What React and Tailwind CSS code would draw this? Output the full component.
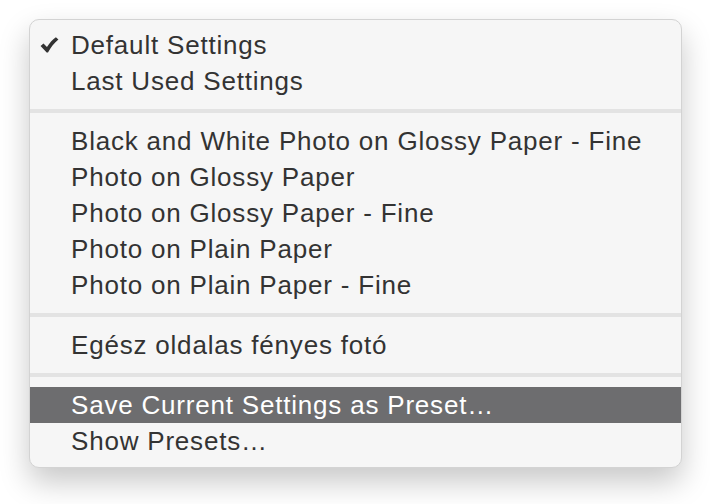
const groups = [
  [
    { label: "Default Settings", checked: true },
    { label: "Last Used Settings" },
  ],
  [
    { label: "Black and White Photo on Glossy Paper - Fine" },
    { label: "Photo on Glossy Paper" },
    { label: "Photo on Glossy Paper - Fine" },
    { label: "Photo on Plain Paper" },
    { label: "Photo on Plain Paper - Fine" },
  ],
  [{ label: "Egész oldalas fényes fotó" }],
  [
    { label: "Save Current Settings as Preset…", active: true },
    { label: "Show Presets…" },
  ],
];

function Check() {
  return (
    <svg viewBox="0 0 20 17" className="w-[19px] h-[16px]" fill="#333">
      <path d="M0.5 9.5 L3.6 6.8 L7.3 10.6 C10 6.5 13 3 16.8 0.3 L19.5 2.6 C15 6.2 11.5 11 8.4 16.5 L7 16.5 Z" />
    </svg>
  );
}

function Item({ item }) {
  return (
    <div
      className={
        "h-[36px] flex items-center " +
        (item.active ? "bg-[#6d6d6f] text-white" : "text-[#333333]")
      }
    >
      <div className="w-[41px] shrink-0 pl-[10px]">{item.checked && <Check />}</div>
      <span className="text-[26px] leading-none tracking-[0.8px]">{item.label}</span>
    </div>
  );
}

export default function App() {
  return (
    <div className="w-[710px] h-[504px] bg-white pt-[19px] pl-[29px]" style={{ fontFamily: '"Liberation Sans", Arial, sans-serif' }}>
      <div className="w-[653px] h-[449px] bg-[#f6f6f6] rounded-[10px] border border-[#d3d3d3] overflow-hidden py-[7px] shadow-[0_14px_30px_rgba(0,0,0,0.22)]">
        {groups.map((g, gi) => (
          <div key={gi}>
            {gi > 0 && (
              <div className="h-[24px] flex items-center">
                <div className="h-[4px] w-full bg-[#e3e3e3]" />
              </div>
            )}
            {g.map((item) => (
              <Item key={item.label} item={item} />
            ))}
          </div>
        ))}
      </div>
    </div>
  );
}
